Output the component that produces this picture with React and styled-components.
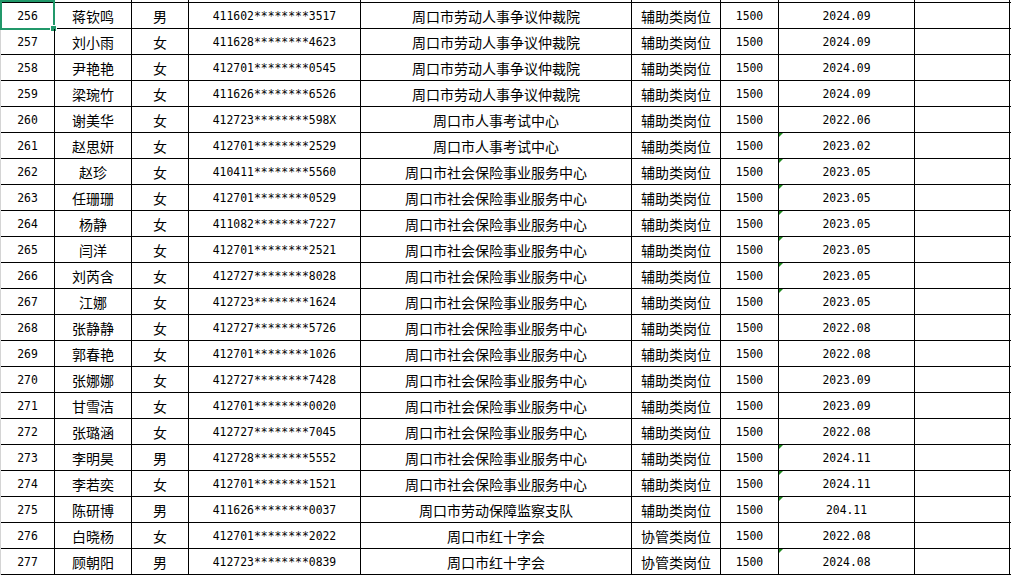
import React from "react";
import styled, { createGlobalStyle } from "styled-components";

const GlobalStyle = createGlobalStyle`
  html, body {
    margin: 0;
    padding: 0;
    background: #ffffff;
    overflow: hidden;
  }
`;

const COLS = "54px 77px 57px 172px 271px 89px 58px 136px 95px";

const SAS = "周口市社会保险事业服务中心";
const LAB = "周口市劳动人事争议仲裁院";

// [no, name, sex, id, unit, type, pay, date, flagged]
const rows = [
  [256, "蒋钦鸣", "男", "411602********3517", LAB, "辅助类岗位", "1500", "2024.09", false],
  [257, "刘小雨", "女", "411628********4623", LAB, "辅助类岗位", "1500", "2024.09", false],
  [258, "尹艳艳", "女", "412701********0545", LAB, "辅助类岗位", "1500", "2024.09", false],
  [259, "梁琬竹", "女", "411626********6526", LAB, "辅助类岗位", "1500", "2024.09", false],
  [260, "谢美华", "女", "412723********598X", "周口市人事考试中心", "辅助类岗位", "1500", "2022.06", false],
  [261, "赵思妍", "女", "412701********2529", "周口市人事考试中心", "辅助类岗位", "1500", "2023.02", true],
  [262, "赵珍", "女", "410411********5560", SAS, "辅助类岗位", "1500", "2023.05", true],
  [263, "任珊珊", "女", "412701********0529", SAS, "辅助类岗位", "1500", "2023.05", true],
  [264, "杨静", "女", "411082********7227", SAS, "辅助类岗位", "1500", "2023.05", true],
  [265, "闫洋", "女", "412701********2521", SAS, "辅助类岗位", "1500", "2023.05", true],
  [266, "刘芮含", "女", "412727********8028", SAS, "辅助类岗位", "1500", "2023.05", true],
  [267, "江娜", "女", "412723********1624", SAS, "辅助类岗位", "1500", "2023.05", true],
  [268, "张静静", "女", "412727********5726", SAS, "辅助类岗位", "1500", "2022.08", false],
  [269, "郭春艳", "女", "412701********1026", SAS, "辅助类岗位", "1500", "2022.08", false],
  [270, "张娜娜", "女", "412727********7428", SAS, "辅助类岗位", "1500", "2023.09", false],
  [271, "甘雪洁", "女", "412701********0020", SAS, "辅助类岗位", "1500", "2023.09", false],
  [272, "张璐涵", "女", "412727********7045", SAS, "辅助类岗位", "1500", "2022.08", false],
  [273, "李明昊", "男", "412728********5552", SAS, "辅助类岗位", "1500", "2024.11", true],
  [274, "李若奕", "女", "412701********1521", SAS, "辅助类岗位", "1500", "2024.11", true],
  [275, "陈研博", "男", "411626********0037", "周口市劳动保障监察支队", "辅助类岗位", "1500", "204.11", true],
  [276, "白晓杨", "女", "412701********2022", "周口市红十字会", "协管类岗位", "1500", "2022.08", false],
  [277, "顾朝阳", "男", "412723********0839", "周口市红十字会", "协管类岗位", "1500", "2024.08", true],
];

const Sheet = styled.div`
  width: 1011px;
  height: 575px;
  overflow: hidden;
  background: #fff;
`;

const Grid = styled.div`
  width: 1010px;
  border-left: 1px solid #d4d4d4;
`;

const Row = styled.div`
  display: grid;
  grid-template-columns: ${COLS};
  height: ${(p) => (p.$cut ? "3px" : "26px")};
  box-sizing: border-box;
  border-bottom: 1px solid #000;
`;

const Cell = styled.div`
  position: relative;
  box-sizing: border-box;
  border-right: 1px solid #000;
  display: flex;
  align-items: center;
  justify-content: center;
  white-space: nowrap;
  overflow: visible;
  color: #000;
  font-family: ${(p) =>
    p.$cjk
      ? `"Noto Sans CJK SC", "Noto Sans", sans-serif`
      : `"DejaVu Sans Mono", "Liberation Mono", monospace`};
  font-size: ${(p) => (p.$cjk ? "14px" : "11.4px")};
  line-height: 1;
  padding-top: ${(p) => (p.$cjk ? "1px" : "2px")};

  ${(p) =>
    p.$flag &&
    `
    &::before {
      content: "";
      position: absolute;
      left: 0;
      top: 0;
      width: 0;
      height: 0;
      border-top: 4px solid #1f8a1f;
      border-right: 4px solid transparent;
    }
  `}
`;

const Selection = styled.div`
  position: absolute;
  left: -1px;
  top: -3px;
  width: 55px;
  height: 30px;
  box-sizing: border-box;
  border: 2px solid #21986a;
  pointer-events: none;

  &::after {
    content: "";
    position: absolute;
    right: -4px;
    bottom: -4px;
    width: 5px;
    height: 5px;
    background: #21986a;
    border: 1px solid #fff;
    box-sizing: content-box;
  }
`;

const App = () => {
  return (
    <>
      <GlobalStyle />
      <Sheet>
        <Grid>
          <Row $cut>
            {Array.from({ length: 9 }).map((_, i) => (
              <Cell key={i} />
            ))}
          </Row>
          {rows.map(([no, name, sex, id, unit, type, pay, date, flag], idx) => (
            <Row key={no}>
              <Cell>
                {no}
                {idx === 0 && <Selection />}
              </Cell>
              <Cell $cjk>{name}</Cell>
              <Cell $cjk>{sex}</Cell>
              <Cell>{id}</Cell>
              <Cell $cjk>{unit}</Cell>
              <Cell $cjk>{type}</Cell>
              <Cell>{pay}</Cell>
              <Cell $flag={flag}>{date}</Cell>
              <Cell />
            </Row>
          ))}
        </Grid>
      </Sheet>
    </>
  );
};

export default App;
